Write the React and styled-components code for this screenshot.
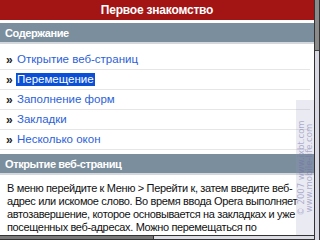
import React from 'react';
import styled, { createGlobalStyle } from 'styled-components';

const GlobalStyle = createGlobalStyle`
  html, body {
    margin: 0;
    padding: 0;
    background: #ffffff;
  }
`;

const Screen = styled.div`
  position: relative;
  width: 320px;
  height: 240px;
  overflow: hidden;
  display: grid;
  grid-template-columns: 314px 6px;
  grid-template-rows: 235px 5px;
  font-family: "Liberation Sans", Arial, sans-serif;
  background: #fff;
`;

const Page = styled.div`
  grid-column: 1;
  grid-row: 1;
  display: flex;
  flex-direction: column;
  overflow: hidden;
`;

const TitleBar = styled.div`
  height: 20px;
  background: #a31414;
  color: #fff;
  font-weight: bold;
  font-size: 12px;
  letter-spacing: -0.2px;
  display: flex;
  align-items: center;
  justify-content: center;
  flex-shrink: 0;
`;

const SectionHeader = styled.div`
  height: 19px;
  margin-top: ${props => props.top}px;
  background: #7b8e9d;
  border-bottom: 2px solid #d4d8dc;
  color: #fff;
  font-weight: bold;
  font-size: 11px;
  letter-spacing: -0.4px;
  display: flex;
  align-items: center;
  padding-left: 5px;
  flex-shrink: 0;
`;

const List = styled.div`
  display: flex;
  flex-direction: column;
  padding-top: 6px;
  padding-right: 4px;
`;

const Row = styled.div`
  height: 19px;
  border-bottom: 1px solid #e6e6e6;
  display: flex;
  align-items: center;
  padding-left: 6px;
  font-size: 11.5px;
`;

const Chevron = styled.span`
  color: #222;
  font-size: 12px;
  font-weight: bold;
  width: 10px;
`;

const Link = styled.span`
  color: ${props => (props.selected ? '#fff' : '#2c5fd8')};
  background: ${props => (props.selected ? '#0b4fd6' : 'transparent')};
  padding: 0 1px;
  line-height: 13px;
`;

const Body = styled.div`
  padding: 7px 6px 0 7px;
  font-size: 11px;
  letter-spacing: -0.35px;
  line-height: 13px;
  color: #111;
`;

const VScroll = styled.div`
  grid-column: 2;
  grid-row: 1 / 3;
  border-left: 1px solid #333;
  border-right: 1px solid #333;
  background: #d9d9e3;
  display: flex;
  flex-direction: column;
`;

const VThumb = styled.div`
  height: 50px;
  background: #8b8b8b;
  border-bottom: 1px solid #444;
`;

const HScroll = styled.div`
  grid-column: 1;
  grid-row: 2;
  border-top: 1px solid #333;
  border-bottom: 1px solid #333;
  background: #dcdce4;
  display: flex;
`;

const HThumb = styled.div`
  width: 153px;
  background: #7a7a7a;
  border-right: 1px solid #333;
`;

const Watermark = styled.div`
  position: absolute;
  right: 6px;
  top: 100px;
  width: 18px;
  height: 135px;
  background: rgba(150, 150, 190, 0.2);
  display: flex;
  align-items: center;
  justify-content: center;
  overflow: hidden;
`;

const WatermarkText = styled.div`
  transform: rotate(-90deg);
  white-space: nowrap;
  font-size: 8.5px;
  line-height: 8px;
  color: rgba(110, 110, 170, 0.5);
  font-family: "DejaVu Sans", sans-serif;
  text-align: center;
`;

const links = [
  'Открытие веб-страниц',
  'Перемещение',
  'Заполнение форм',
  'Закладки',
  'Несколько окон',
];

export default function App() {
  return (
    <>
      <GlobalStyle />
      <Screen>
        <Page>
          <TitleBar>Первое знакомство</TitleBar>
          <SectionHeader top={3}>Содержание</SectionHeader>
          <List>
            {links.map((text, i) => (
              <Row key={i}>
                <Chevron>»</Chevron>
                <Link selected={i === 1}>{text}</Link>
              </Row>
            ))}
          </List>
          <SectionHeader top={4}>Открытие веб-страниц</SectionHeader>
          <Body>
            В меню перейдите к Меню &gt; Перейти к, затем введите веб-адрес или искомое слово. Во время ввода Opera выполняет автозавершение, которое основывается на закладках и уже посещенных веб-адресах. Можно перемещаться по
          </Body>
        </Page>
        <VScroll>
          <VThumb />
        </VScroll>
        <HScroll>
          <HThumb />
        </HScroll>
        <Watermark>
          <WatermarkText>
            © 2007 www.ixbt.com
            <br />
            www.mobile-life.com
          </WatermarkText>
        </Watermark>
      </Screen>
    </>
  );
}
